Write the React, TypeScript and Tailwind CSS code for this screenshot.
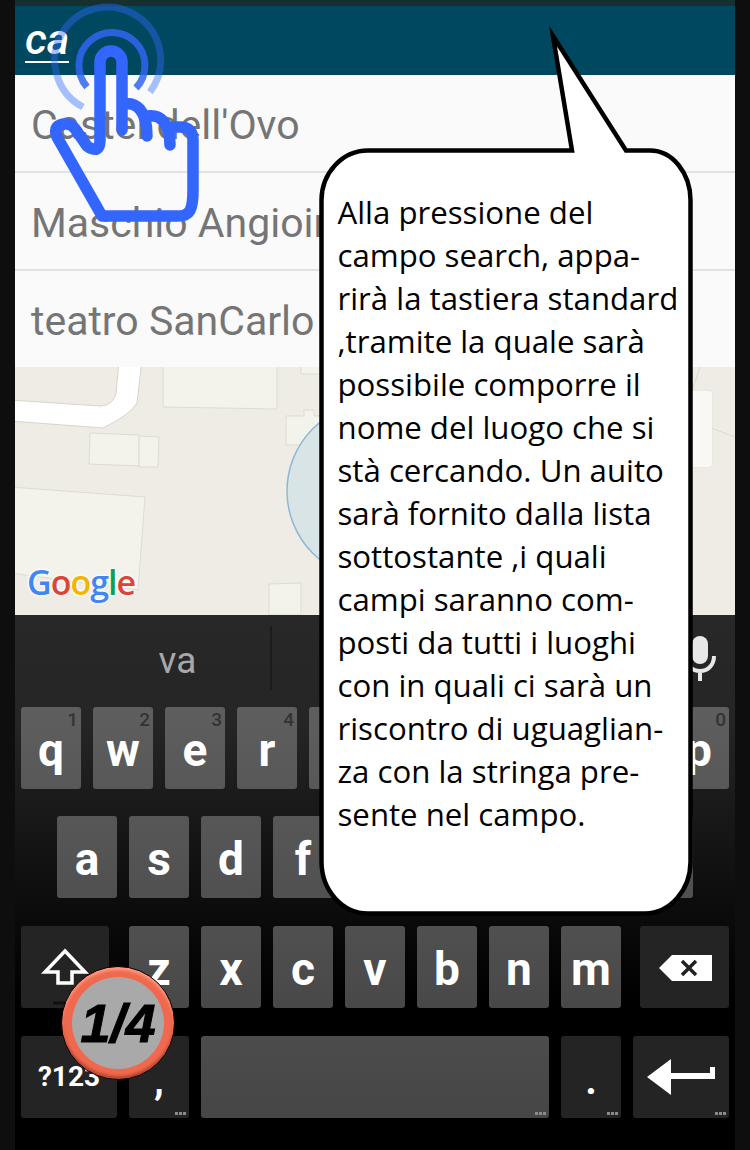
import React from "react";

const bubbleLines = [
  "Alla pressione del",
  "campo search, appa-",
  "rirà la tastiera standard",
  ",tramite la quale sarà",
  "possibile comporre il",
  "nome del luogo che si",
  "stà cercando. Un auito",
  "sarà fornito dalla lista",
  "sottostante ,i quali",
  "campi saranno com-",
  "posti da tutti i luoghi",
  "con in quali ci sarà un",
  "riscontro di uguaglian-",
  "za con la stringa pre-",
  "sente nel campo.",
];

const places = ["Castel dell'Ovo", "Maschio Angioino", "teatro SanCarlo"];

const Dots = () => (
  <span className="absolute right-[3px] bottom-[3px] flex gap-[1px]">
    <span className="h-[3px] w-[3px] bg-[#8a8a8a]" />
    <span className="h-[3px] w-[3px] bg-[#8a8a8a]" />
    <span className="h-[3px] w-[3px] bg-[#8a8a8a]" />
  </span>
);

type KeyProps = {
  label?: React.ReactNode;
  hint?: string;
  dots?: boolean;
  tone?: string;
  className?: string;
};

// letter keys get lighter towards the top of the keyboard
const Key = ({ label, hint, dots, tone = "bg-[#242424]", className = "w-[60px]" }: KeyProps) => (
  <div
    className={`relative flex h-[82px] shrink-0 items-center justify-center rounded-[3px] font-bold text-white ${tone} ${className}`}
  >
    {hint && (
      <span className="absolute top-[1px] right-[3px] text-[19px] leading-[24px] font-medium text-[#333333]">
        {hint}
      </span>
    )}
    {label}
    {dots && <Dots />}
  </div>
);

const Letter = ({ children }: { children: string }) => (
  <span className="mt-[4px] text-[46px] leading-none">{children}</span>
);

const MapArea = () => (
  <div className="relative h-[248px] overflow-hidden bg-[#eeece4]">
    <svg width="720" height="248" viewBox="15 367 720 248" className="block">
      <g fill="#f3f2eb" stroke="#dddcd3" strokeWidth="1">
        <path d="M163 360 L277 360 L277 409 L163 407 Z" />
        <path d="M301 360 H330 V374 H301 Z" />
        <path d="M286 416 H304 V410 H314 V416 H330 V445 H286 Z" />
        <path d="M90 433 L139 435 L139 466 L89 464 Z" />
        <path d="M139 436 L159 437 L158 467 L139 467 Z" />
        <path d="M10 487 L145 497 L138 590 L10 573 Z" />
        <path d="M269 584 L301 583 L301 615 L269 615 Z" />
      </g>
      <path
        d="M10 400 L100 406 Q112 406 116 394 L119 360 L142 360 L137 403 Q130 415 103 428 L10 421 Z"
        fill="#ffffff"
        stroke="#d8d4c8"
        strokeWidth="1"
      />
      <circle cx="375" cy="491" r="88" fill="#d8e4e6" stroke="#8fb8d4" strokeWidth="1.5" />
      <path d="M690 420 L735 437 M700 367 L692 391" stroke="#dddcd3" fill="none" />
    </svg>
    <div className="absolute top-[24px] left-[670px] h-[76px] w-[27px] rounded-[3px] bg-[#f9f8f4] shadow-[0_0_2px_#dddcd3]" />
    <div className="absolute top-[194px] left-[12px] font-['Open_Sans',sans-serif] text-[34px] leading-[42px] font-semibold tracking-[-1px] [text-shadow:0_0_3px_#fff,0_0_3px_#fff,0_0_3px_#fff]">
      <span className="text-[#4285f4]">G</span>
      <span className="text-[#db4437]">o</span>
      <span className="text-[#f4b400]">o</span>
      <span className="text-[#4285f4]">g</span>
      <span className="text-[#0f9d58]">l</span>
      <span className="text-[#db4437]">e</span>
    </div>
  </div>
);

const Hand = () => (
  <svg width="210" height="225" viewBox="0 0 210 225" fill="none" className="absolute top-0 left-0">
    <path d="M83 107 A53 53 0 1 1 150 92" stroke="#2f6bff" strokeOpacity="0.42" strokeWidth="7" />
    <path d="M87 87 A33 33 0 1 1 136 88" stroke="#2f66f0" strokeOpacity="0.85" strokeWidth="7" />
    <path
      d="M100 140 L100 62 A11 11 0 0 1 122 62 L122 130 M122 104 C136 101 147 110 147 136 M147 116 C160 114 170 122 170 145 M170 127 L180 127 Q193 127 193 140 L193 190 C193 210 190 216 178 216 L102 216 L57 137 Q52 124 66 124 Q72 124 76 130 L87 146 Q100 155 100 140"
      stroke="#3366ff"
      strokeWidth="11.5"
      strokeLinecap="round"
      strokeLinejoin="round"
    />
  </svg>
);

const Bubble = () => (
  <div className="absolute top-0 left-0 h-[930px] w-[700px]">
    <svg width="700" height="930" viewBox="0 0 700 930" className="absolute top-0 left-0">
      <path
        d="M368 150.5 L572 150.5 L553 36 L626 150.5 L650 150.5 A40.5 50 0 0 1 690.5 200 L690.5 862 A46 52 0 0 1 645 913.5 L368 913.5 A46.5 52 0 0 1 321.5 862 L321.5 200 A46.5 50 0 0 1 368 150.5 Z"
        fill="#ffffff"
        stroke="#000000"
        strokeWidth="4.5"
        strokeMiterlimit="10"
      />
    </svg>
    <div className="absolute top-[190.5px] left-[337.5px] font-['Open_Sans',sans-serif] text-[31.2px] leading-[43px] whitespace-nowrap text-black">
      {bubbleLines.map((line) => (
        <div key={line}>{line}</div>
      ))}
    </div>
  </div>
);

const Badge = () => (
  <div className="absolute top-[966px] left-[61px] flex h-[114px] w-[114px] items-center justify-center rounded-full border border-black bg-[#f0694e] shadow-[inset_0_3px_3px_#ff9a80,inset_0_-3px_3px_#b8452f]">
    <div className="flex h-[92px] w-[92px] items-center justify-center rounded-full bg-[#a9a9a9] font-['Liberation_Sans',sans-serif] text-[54px] font-bold text-black italic [-webkit-text-stroke:1px_#000]">
      1/4
    </div>
  </div>
);

export default function App() {
  return (
    <div className="relative h-[1150px] w-[750px] overflow-hidden bg-[#0e0e0e] font-['Roboto',sans-serif]">
      <div className="mx-[15px] flex h-full flex-col">
        <div className="h-[6px] bg-[#16302f]" />
        <div className="flex h-[69px] items-center bg-[#00485f] pl-[10px]">
          <span className="border-b-2 border-white text-[43px] leading-[43px] font-medium text-white italic">ca</span>
        </div>
        <div className="bg-[#fafafa]">
          {places.map((place) => (
            <div
              key={place}
              className="flex h-[98px] items-center border-b-2 border-[#e2e2e2] pt-[5px] pl-[16px] text-[41px] whitespace-nowrap text-[#757575] last:h-[96px] last:border-b-0"
            >
              {place}
            </div>
          ))}
        </div>
        <MapArea />
        <div className="flex flex-1 flex-col bg-[linear-gradient(#282828_0%,#252525_20%,#0d0d0d_53%,#000000_72%)]">
          <div className="flex h-[92px] pt-[11px]">
            <div className="flex h-[64px] w-[257px] items-center justify-center border-r-2 border-[#1c1c1c] pt-[6px] pl-[70px] text-[37px] text-[#a8a8a8]">
              va
            </div>
            <div className="flex flex-1 justify-end pt-[8px] pr-[18px]">
              <svg width="34" height="48" viewBox="0 0 34 48" fill="none">
                <rect x="9" y="2" width="16" height="28" rx="8" fill="#e8e8e8" />
                <path d="M3 22 C3 42 31 42 31 22 M17 36 V47" stroke="#e8e8e8" strokeWidth="4" />
              </svg>
            </div>
          </div>
          <div className="flex flex-col gap-[28px] pl-[6px]">
            <div className="flex gap-3">
              {["q", "w", "e", "r", "t", "y", "u", "i", "o", "p"].map((k, i) => (
                <Key
                  key={k}
                  tone="bg-gradient-to-b from-[#5e5e5e] to-[#585858]"
                  label={<Letter>{k}</Letter>}
                  hint={String((i + 1) % 10)}
                />
              ))}
            </div>
            <div className="-mt-[1px] flex gap-3 pl-[36px]">
              {["a", "s", "d", "f", "g", "h", "j", "k", "l"].map((k) => (
                <Key key={k} tone="bg-gradient-to-b from-[#575757] to-[#505050]" label={<Letter>{k}</Letter>} />
              ))}
            </div>
            <div className="flex gap-3">
              <Key
                className="mr-2 w-[88px]"
                label={
                  <svg width="52" height="60" viewBox="0 0 52 60" fill="none" className="mt-[19px] -ml-[1px]">
                    <path d="M26 4 L46 25 L33 25 L33 36 L19 36 L19 25 L6 25 Z" stroke="#fff" strokeWidth="3.5" />
                    <path d="M14 56 H40" stroke="#111" strokeWidth="3" />
                  </svg>
                }
              />
              {["z", "x", "c", "v", "b", "n", "m"].map((k) => (
                <Key key={k} tone="bg-gradient-to-b from-[#505050] to-[#484848]" label={<Letter>{k}</Letter>} />
              ))}
              <Key
                className="ml-[7px] w-[89px]"
                label={
                  <svg width="54" height="26" viewBox="0 0 54 26" className="mt-[1px] ml-[2px]">
                    <path d="M0 13 L13 0 H53 V26 H13 Z" fill="#fff" />
                    <path d="M23 6 L37 20 M37 6 L23 20" stroke="#222" strokeWidth="3.5" />
                  </svg>
                }
              />
            </div>
            <div className="flex gap-3">
              <Key className="w-[96px]" label={<span className="text-[28px]">?123</span>} />
              <Key dots label={<span className="mt-[8px] text-[40px]">,</span>} />
              <Key dots tone="bg-gradient-to-b from-[#4c4c4c] to-[#464646]" className="w-[348px]" />
              <Key dots label={<span className="mt-[8px] text-[40px]">.</span>} />
              <Key
                dots
                className="w-[96px]"
                label={
                  <svg width="68" height="36" viewBox="0 0 68 36">
                    <path d="M0 18 L24 0 V14 H63 V8 H68 V20 H24 V36 Z" fill="#fff" />
                  </svg>
                }
              />
            </div>
          </div>
        </div>
      </div>
      <Bubble />
      <Hand />
      <Badge />
    </div>
  );
}
